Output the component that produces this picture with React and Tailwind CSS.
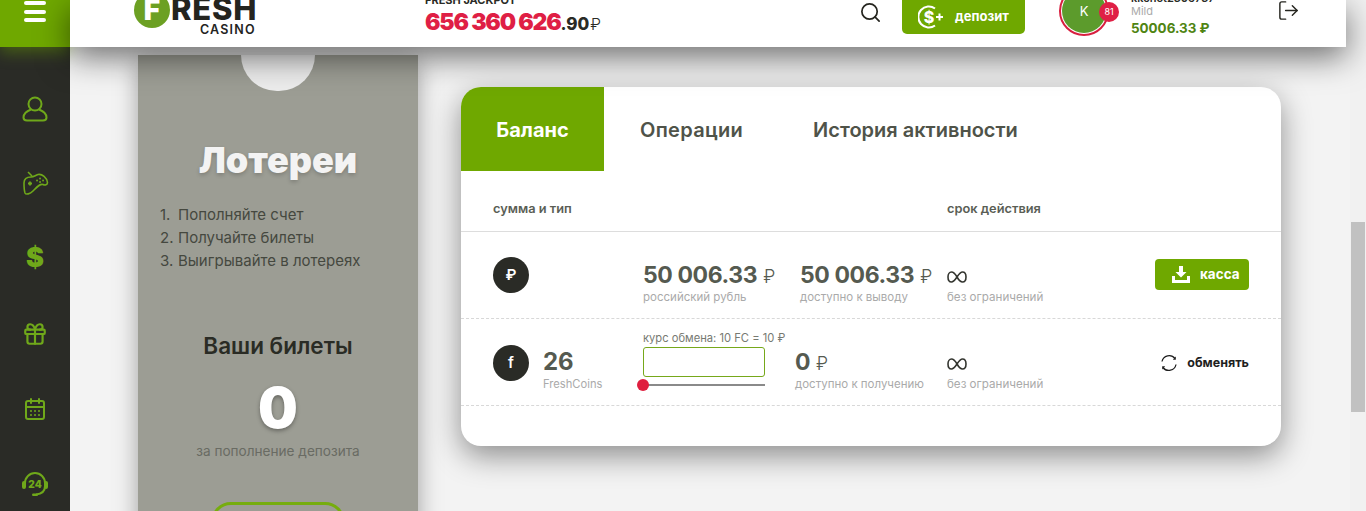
import React from "react";
import { Search, LogOut, Gift, CalendarDays } from "lucide-react";

const font = { fontFamily: "Inter, 'Noto Sans', sans-serif" };

const UserIcon = () => (
  <svg width="26" height="26" viewBox="0 0 26 26" fill="none" stroke="#6fa81a" strokeWidth="2">
    <circle cx="13" cy="8" r="6.5" />
    <path d="M9 13.5C5 15 1.5 18 1.5 21.5C1.5 23.5 3 24.5 5 24.5H21C23 24.5 24.5 23.5 24.5 21.5C24.5 18 21 15 17 13.5" />
  </svg>
);

const PadIcon = () => (
  <svg width="27" height="26" viewBox="0 0 27 26" fill="none" stroke="#6fa81a" strokeWidth="1.6">
    <path d="M6 1L10 5" />
    <path d="M2 12C2 8 5 6 9 6C12 6 13 4.5 16 3.5C20 2.5 25 7 25.5 11.5C25.5 14 23 14.5 21 13.5C18 12.5 15 16 11 20C8 23 4 24 3 22C2 19 2 16 2 12Z" />
    <path d="M6 12.5H10M8 10.5V14.5" strokeWidth="1.8" />
    <path d="M15 9.5h.1M18 7.5h.1M18 11h.1M21 9.5h.1" strokeWidth="1.8" strokeLinecap="round" />
  </svg>
);

const HeadsetIcon = () => (
  <svg width="28" height="26" viewBox="0 0 28 26">
    <path d="M4 15V12A10 10 0 0 1 24 12V15C24 20 21 23 15 23.5" fill="none" stroke="#6fa81a" strokeWidth="2" />
    <rect x="1" y="10" width="4" height="8" rx="2" fill="#6fa81a" />
    <rect x="23" y="10" width="4" height="8" rx="2" fill="#6fa81a" />
    <rect x="11" y="22.5" width="6" height="2.5" rx="1.2" fill="#6fa81a" />
    <text x="14" y="17" textAnchor="middle" fontSize="10" fontWeight="900" fill="#6fa81a" fontFamily="Inter, sans-serif">24</text>
  </svg>
);

const InfinityIcon = () => (
  <svg width="20" height="12" viewBox="0 0 20 12" fill="none" stroke="#33352f" strokeWidth="1.6">
    <path d="M10 6C8 2.5 6.5 1 4.5 1C2.5 1 1 3 1 6C1 9 2.5 11 4.5 11C6.5 11 8 9 10 6C12 3 13.5 1 15.5 1C17.5 1 19 3 19 6C19 9 17.5 11 15.5 11C13.5 11 12 9.5 10 6Z" />
  </svg>
);

const ExchangeIcon = () => (
  <svg width="18" height="18" viewBox="0 0 18 18" fill="none" stroke="#1f1f1f" strokeWidth="1.3">
    <path d="M2 7.5A7.3 7.3 0 0 1 15 4.5" />
    <path d="M16 10.5A7.3 7.3 0 0 1 3 13.5" />
    <path d="M15.8 2.5V5.8H12.8Z" fill="#1f1f1f" stroke="none" />
    <path d="M2.2 15.5V12.2H5.2Z" fill="#1f1f1f" stroke="none" />
  </svg>
);

const DepositIcon = () => (
  <svg width="26" height="26" viewBox="0 0 26 26" fill="none" stroke="#fff" strokeWidth="2">
    <path d="M17 4.5A10.5 10.5 0 1 0 17 21.5" />
    <text x="11" y="19" textAnchor="middle" fontSize="16" fontWeight="800" fill="#fff" stroke="none" fontFamily="Inter, sans-serif">$</text>
    <path d="M18 13H25M21.5 9.5V16.5" />
  </svg>
);

const CashIcon = () => (
  <svg width="18" height="17" viewBox="0 0 18 17" fill="#fff">
    <path d="M7 0H11V6H14.5L9 11.5L3.5 6H7Z" />
    <path d="M0 10H3V14H15V10H18V17H0Z" />
  </svg>
);

const Money = ({ value, label, className = "" }) => (
  <div className={className}>
    <div className="flex items-baseline h-[30px]">
      <span className="text-[23px] leading-[30px] font-bold text-[#555a50] tracking-[-0.4px]">{value}</span>
      <span className="text-[18px] font-light text-[#555a50] ml-[6px]">₽</span>
    </div>
    <div className="text-[11.5px] leading-[14px] text-[#aaaaaa] whitespace-nowrap">{label}</div>
  </div>
);

const NoLimit = () => (
  <div className="w-[208px] shrink-0 pt-[35px]">
    <div className="h-[20px] flex items-center"><InfinityIcon /></div>
    <div className="mt-[3px] text-[11.6px] leading-[14px] text-[#aaaaaa] whitespace-nowrap">без ограничений</div>
  </div>
);

const Sidebar = () => (
  <aside className="w-[70px] shrink-0 bg-[#2a2b26] flex flex-col items-center">
    <div className="w-full h-[47px] shrink-0 bg-[#6fa800] shadow-[0_6px_14px_rgba(111,168,0,0.4)] flex flex-col items-center gap-[4.5px] pt-[1px]">
      <span className="block w-[22px] h-[4px] rounded-full bg-white" />
      <span className="block w-[22px] h-[4px] rounded-full bg-white" />
      <span className="block w-[22px] h-[4px] rounded-full bg-white" />
    </div>
    <nav className="flex flex-col items-center shrink-0 mt-[24px]">
      <div className="h-[75px] flex items-center"><UserIcon /></div>
      <div className="h-[75px] flex items-center"><PadIcon /></div>
      <div className="h-[75px] flex items-center text-[27px] font-black text-[#6fa81a]">$</div>
      <div className="h-[75px] flex items-center"><Gift size={26} color="#6fa81a" strokeWidth={2} /></div>
      <div className="h-[75px] flex items-center"><CalendarDays size={24} color="#6fa81a" strokeWidth={2} /></div>
      <div className="h-[75px] flex items-center"><HeadsetIcon /></div>
    </nav>
  </aside>
);

const Header = () => (
  <header className="relative z-10 w-[1276px] h-[47px] shrink-0 bg-white shadow-[0_10px_32px_rgba(0,0,0,0.55)] overflow-hidden flex items-start">
    <div className="ml-[64px] w-[124px] shrink-0 -mt-[8px]">
      <div className="flex items-center h-[36px]">
        <span className="w-[36px] h-[36px] shrink-0 rounded-full bg-[#6ca023] text-white text-[28px] font-black flex items-center justify-center">F</span>
        <span className="ml-[1px] text-[31px] leading-[30px] font-extrabold text-[#24241f] tracking-[0.8px] -mt-[2px]">RESH</span>
      </div>
      <div className="mt-[-4px] pl-[66px] text-[12.5px] leading-[12px] font-semibold tracking-[1.2px] text-[#24241f]">CASINO</div>
    </div>
    <div className="ml-[167px] w-[300px] shrink-0 -mt-[6px]">
      <div className="text-[11px] leading-[13px] font-bold text-[#2a2b26]">FRESH JACKPOT</div>
      <div className="flex items-baseline leading-[28px] mt-[1px]">
        <span className="text-[23px] font-black text-[#df1f45] tracking-[-1.2px]">656 360 626</span>
        <span className="text-[17px] font-extrabold text-[#2a2b26]">.90</span>
        <span className="text-[16px] font-light text-[#2a2b26] ml-[1px]">₽</span>
      </div>
    </div>
    <Search size={23} color="#25251f" strokeWidth={1.8} className="ml-[134px] mt-[1px] shrink-0" />
    <div className="ml-[20px] w-[123px] h-[34px] shrink-0 bg-[#6fa800] rounded-b-[5px] flex items-center justify-center gap-[11px] text-white text-[13px] font-bold">
      <DepositIcon />депозит
    </div>
    <div className="relative ml-[34px] w-[50px] h-[50px] -mt-[14px] shrink-0 rounded-full border-[2px] border-[#d81f3f] p-[1px] bg-white">
      <div className="w-full h-full rounded-full bg-[#5c9b2c] text-white text-[13px] pt-[2px] flex items-center justify-center">K</div>
      <span className="absolute -right-[12px] top-[14px] w-[20px] h-[20px] rounded-full bg-[#df1f45] text-white text-[9px] flex items-center justify-center">81</span>
    </div>
    <div className="ml-[22px] w-[146px] shrink-0 -mt-[8px]">
      <div className="text-[11px] leading-[12px] font-semibold text-[#2a2b26]">kkchot2305737</div>
      <div className="text-[11px] leading-[14px] text-[#aaaaaa]">Mild</div>
      <div className="text-[13.4px] leading-[18px] mt-[1px] font-bold text-[#4f8412]">50006.33 ₽</div>
    </div>
    <LogOut size={23} color="#25251f" strokeWidth={1.5} className="shrink-0 -mt-[1px]" />
  </header>
);

const Ticket = () => (
  <div className="w-[280px] shrink-0 h-[480px] bg-[#9c9d94] shadow-[0_6px_22px_rgba(0,0,0,0.35)] text-center mt-[8px]">
    <div className="w-[74px] h-[36px] mx-auto rounded-b-full bg-[#ececec]" />
    <h1 className="mt-[47px] text-[36px] leading-[44px] font-black text-[#f3f3f3] [text-shadow:0_2px_4px_rgba(0,0,0,0.2)]">Лотереи</h1>
    <ol className="mt-[21px] ml-[22px] text-left text-[15px] leading-[23px] text-[#45483f]">
      <li className="flex"><span className="w-[18px]">1.</span>Пополняйте счет</li>
      <li className="flex"><span className="w-[18px]">2.</span>Получайте билеты</li>
      <li className="flex"><span className="w-[18px]">3.</span>Выигрывайте в лотереях</li>
    </ol>
    <h2 className="mt-[60px] text-[22.5px] leading-[28px] font-semibold text-[#2a2c25]">Ваши билеты</h2>
    <div className="mt-[16px] text-[56px] leading-[64px] font-black text-white [text-shadow:0_2px_4px_rgba(0,0,0,0.35)]">0</div>
    <div className="mt-[2px] text-[13.6px] leading-[18px] text-[#696b63]">за пополнение депозита</div>
    <div className="mx-auto mt-[42px] w-[134px] h-[40px] rounded-[20px] border-[3px] border-[#76ad0e]" />
  </div>
);

const Balance = () => (
  <section className="w-[820px] shrink-0 h-[359px] mt-[40px] ml-[43px] bg-white rounded-[20px] shadow-[0_10px_30px_rgba(0,0,0,0.42)] overflow-hidden">
    <div className="flex items-center h-[84px] text-[20px] font-semibold text-[#4f5349]">
      <div className="w-[143px] h-full bg-[#6fa800] text-white font-bold pt-[2px] flex items-center justify-center">Баланс</div>
      <div className="ml-[36px] pt-[2px] tracking-[0.3px]">Операции</div>
      <div className="ml-[70px] pt-[2px]">История активности</div>
    </div>
    <div className="h-[61px] border-b border-[#dddddd] flex pl-[32px] pt-[30px] text-[12.8px] leading-[16px] font-semibold text-[#5a5e55]">
      <div className="w-[454px]">сумма и тип</div>
      <div>срок действия</div>
    </div>
    <div className="h-[87px] border-b border-dashed border-[#d8d8d8] flex items-start pl-[32px]">
      <div className="w-[150px] shrink-0 pt-[25px]">
        <div className="w-[36px] h-[36px] rounded-full bg-[#2a2b26] text-white font-semibold text-[15px] flex items-center justify-center">₽</div>
      </div>
      <Money value="50 006.33" label="российский рубль" className="w-[157px] shrink-0 pt-[28px]" />
      <Money value="50 006.33" label="доступно к выводу" className="w-[147px] shrink-0 pt-[28px]" />
      <NoLimit />
      <div className="w-[94px] h-[31px] mt-[27px] rounded-[4px] bg-[#6fa800] text-white text-[13.5px] font-bold flex items-center pl-[17px] gap-[10px]">
        <CashIcon />касса
      </div>
    </div>
    <div className="h-[87px] border-b border-dashed border-[#d8d8d8] flex items-start pl-[32px]">
      <div className="w-[150px] shrink-0 flex items-start gap-[14px] pt-[26px]">
        <div className="w-[36px] h-[36px] rounded-full bg-[#2a2b26] text-white font-semibold text-[15px] flex items-center justify-center">f</div>
        <div className="pt-[3px]">
          <div className="text-[24px] leading-[28px] font-bold text-[#555a50]">26</div>
          <div className="mt-[1px] text-[11.2px] leading-[14px] text-[#aaaaaa]">FreshCoins</div>
        </div>
      </div>
      <div className="w-[152px] shrink-0 pt-[12px]">
        <div className="text-[11.2px] leading-[14px] text-[#777a72] whitespace-nowrap">курс обмена: 10 FC = 10 ₽</div>
        <div className="w-[122px] h-[30px] mt-[2px] rounded-[3px] border border-[#76a81a]" />
        <div className="relative w-[122px] h-[2px] mt-[7px] bg-[#8a8a8a]">
          <span className="absolute -left-[6px] -top-[5px] w-[12px] h-[12px] rounded-full bg-[#df1f3f]" />
        </div>
      </div>
      <Money value="0" label="доступно к получению" className="w-[152px] shrink-0 pt-[28px]" />
      <NoLimit />
      <div className="w-[94px] pt-[35px] flex items-center justify-end gap-[9px] text-[12.5px] font-bold text-[#1f1f1f]">
        <ExchangeIcon />обменять
      </div>
    </div>
  </section>
);

const Scrollbar = () => (
  <div className="absolute right-0 top-0 w-[16px] h-full bg-[#f1f1f1] pt-[222px] flex justify-center">
    <div className="w-[14px] h-[190px] bg-[#c1c1c1]" />
  </div>
);

export default function App() {
  return (
    <div className="relative w-[1366px] h-[511px] overflow-hidden flex bg-[#f3f3f3]" style={font}>
      <Sidebar />
      <main className="flex-1 min-w-0 flex flex-col">
        <Header />
        <div className="flex items-start pl-[68px]">
          <Ticket />
          <Balance />
        </div>
      </main>
      <Scrollbar />
    </div>
  );
}
